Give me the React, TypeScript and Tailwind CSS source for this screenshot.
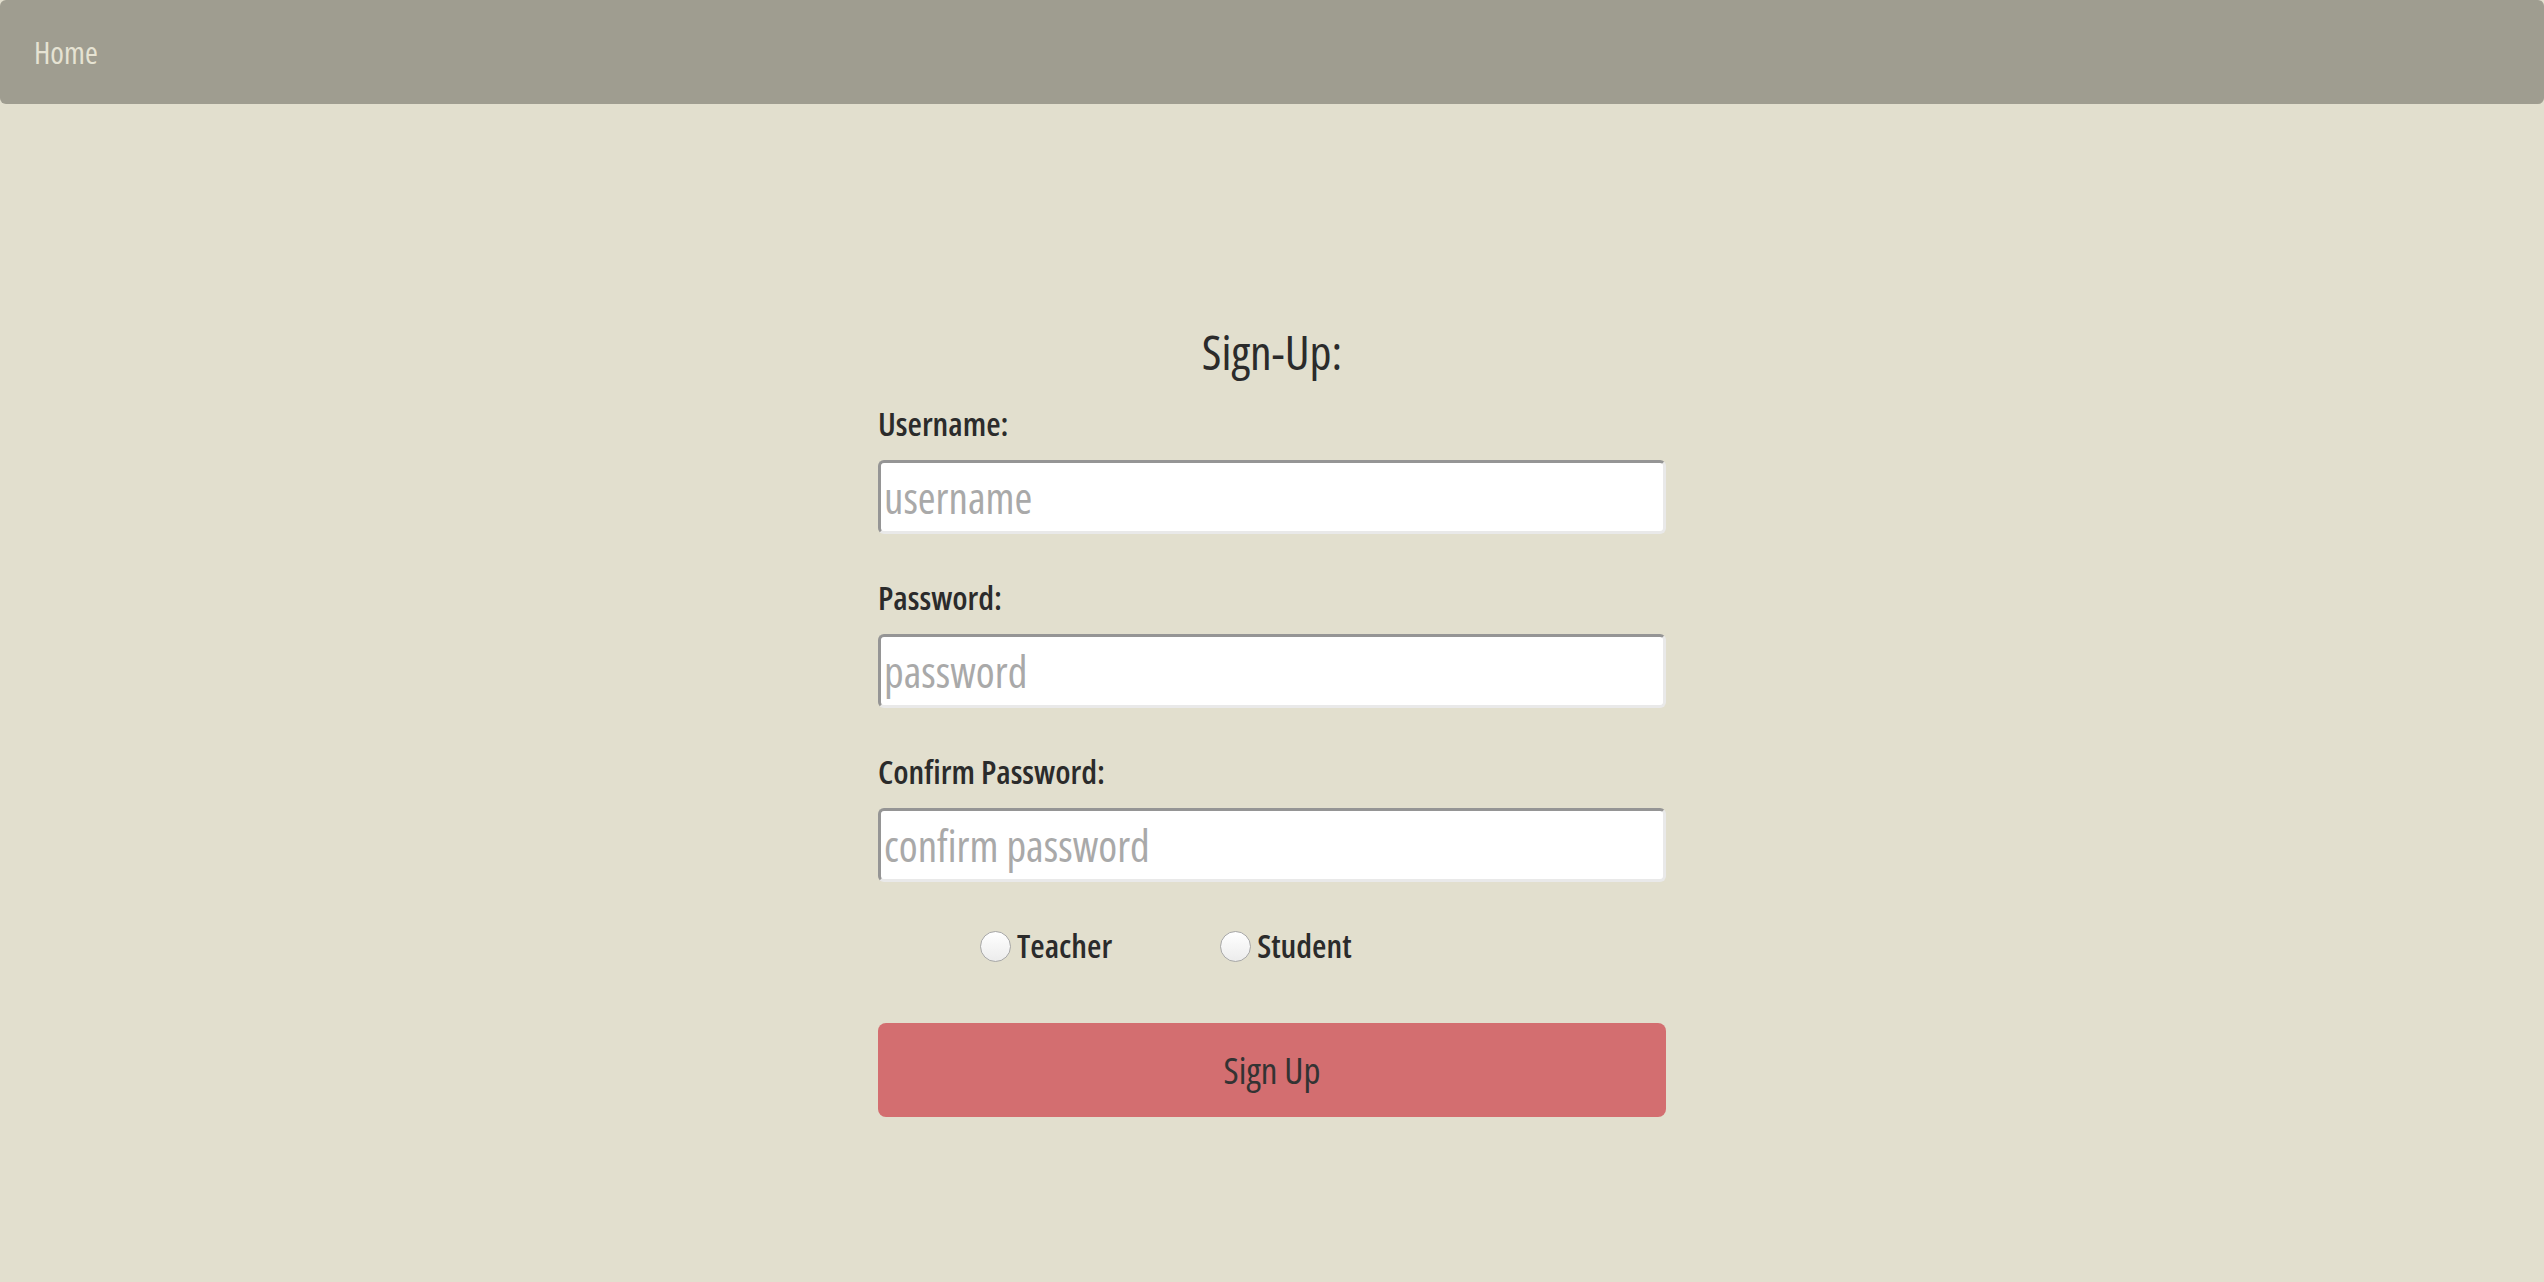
import { useState } from "react";

function Field({ label, placeholder, type = "text" }: { label: string; placeholder: string; type?: string }) {
  return (
    <div className="flex flex-col">
      <label className="h-[36px] text-[33px] font-semibold leading-[36px] text-[#2b2b2b]">{label}</label>
      <input
        type={type}
        placeholder={placeholder}
        className="mt-[18px] h-[74px] w-full rounded-[6px] border-[3px] border-t-[#959595] border-l-[#959595] border-r-[#e9e9e9] border-b-[#e9e9e9] bg-white px-[3px] font-['Open_Sans',sans-serif] text-[43px] font-stretch-[75%] text-[#333] outline-none placeholder:text-[#a9a9a9]"
      />
    </div>
  );
}

function Radio({ label, checked, onClick }: { label: string; checked: boolean; onClick: () => void }) {
  return (
    <button type="button" onClick={onClick} className="flex items-center gap-[6px]">
      <span className="flex h-[31px] w-[31px] items-center justify-center rounded-full border border-[#a8a8a8] bg-gradient-to-b from-white to-[#ececec]">
        {checked && <span className="h-[13px] w-[13px] rounded-full bg-[#444]" />}
      </span>
      <span className="text-[33px] font-semibold leading-[36px] text-[#2b2b2b]">{label}</span>
    </button>
  );
}

export default function App() {
  const [role, setRole] = useState<string | null>(null);

  return (
    <div className="min-h-[1282px] bg-[#e2dfce] font-['Open_Sans',sans-serif] font-stretch-[75%]">
      <nav className="flex h-[104px] items-center rounded-[6px] bg-[#9f9d90] px-[34px]">
        <a href="#" className="text-[31px] text-[#e6e3d3]">Home</a>
      </nav>

      <form className="mx-auto mt-[224px] flex w-[788px] flex-col" onSubmit={(e) => e.preventDefault()}>
        <h1 className="text-center text-[48px] leading-[48px] text-[#2b2b2b]">Sign-Up:</h1>

        <div className="mt-[30px] flex flex-col gap-[46px]">
          <Field label="Username:" placeholder="username" />
          <Field label="Password:" placeholder="password" type="password" />
          <Field label="Confirm Password:" placeholder="confirm password" type="password" />
        </div>

        <div className="mt-[46px] flex gap-[108px] pl-[102px]">
          <Radio label="Teacher" checked={role === "teacher"} onClick={() => setRole("teacher")} />
          <Radio label="Student" checked={role === "student"} onClick={() => setRole("student")} />
        </div>

        <button
          type="submit"
          className="mt-[59px] h-[94px] w-full rounded-[8px] bg-[#d36e70] font-['Open_Sans',sans-serif] text-[37px] font-stretch-[75%] text-[#333]"
        >
          Sign Up
        </button>
      </form>
    </div>
  );
}
